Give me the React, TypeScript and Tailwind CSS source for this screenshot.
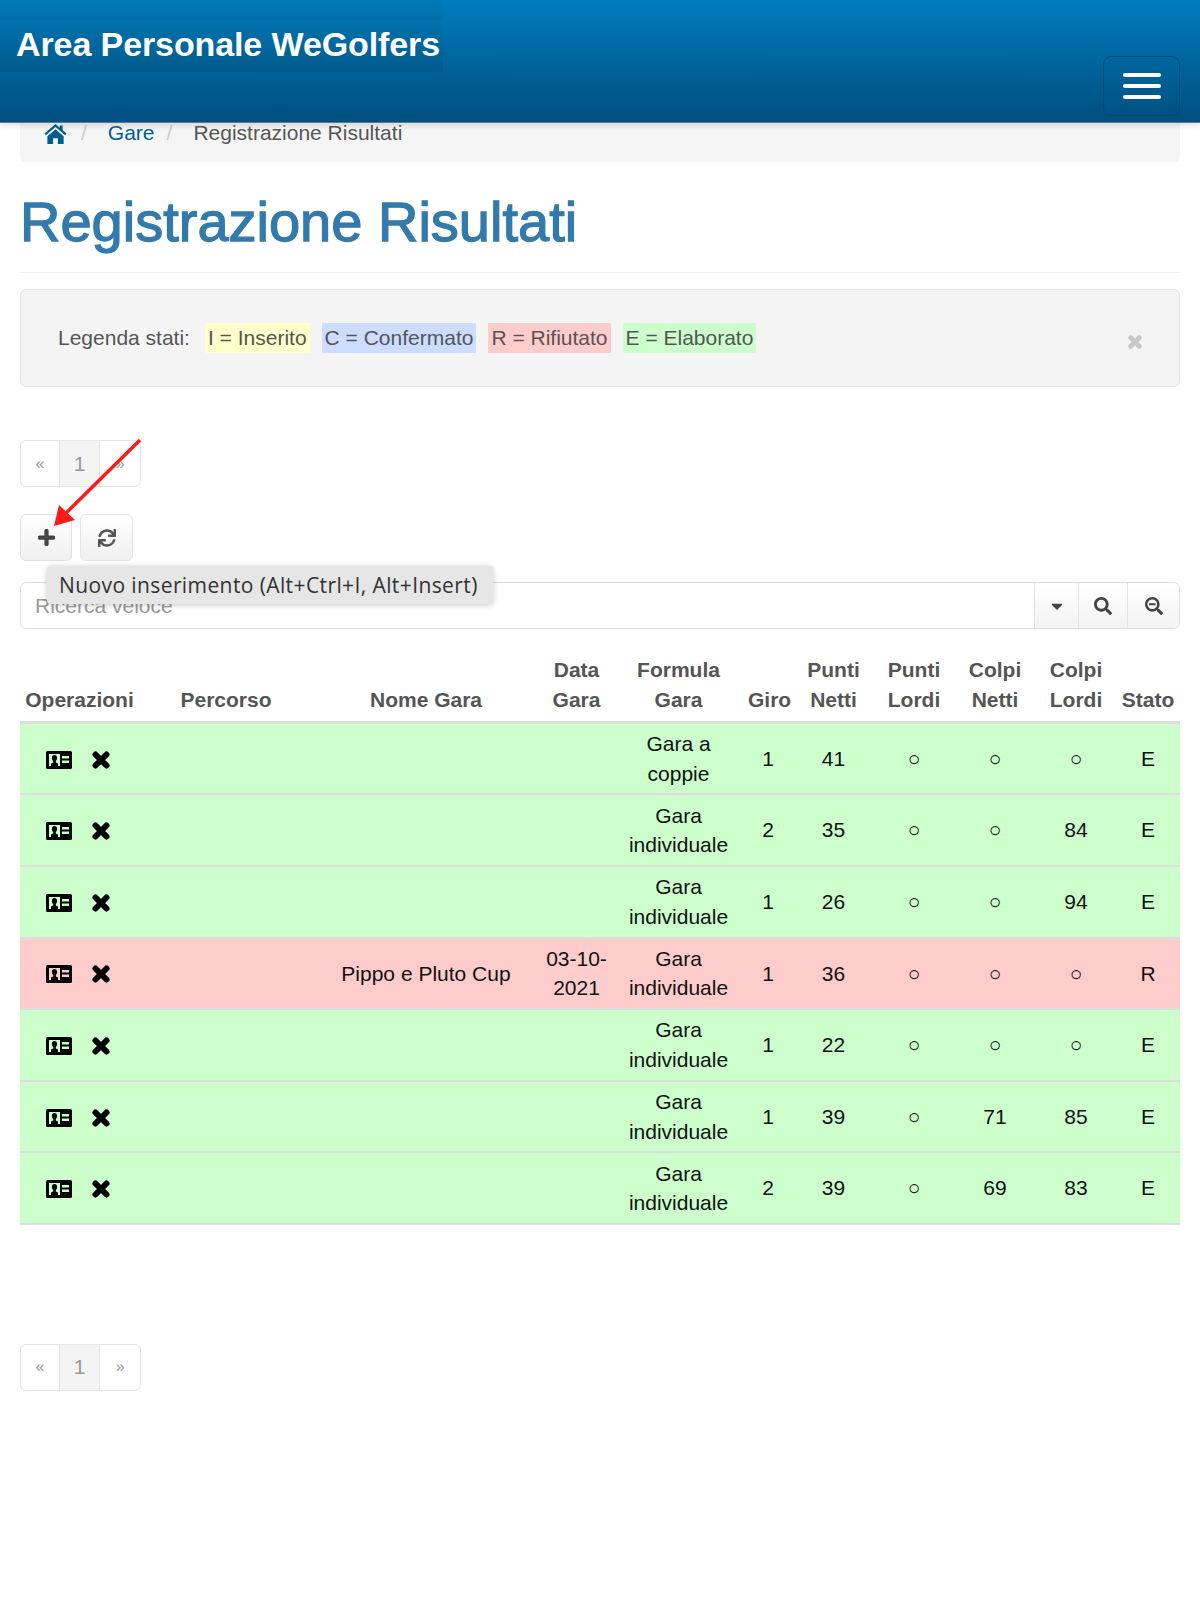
import { FaSearch, FaSearchMinus, FaSync, FaCaretDown } from "react-icons/fa";

type Row = {
  formula: [string, string];
  giro: string;
  netti: string;
  colpiNetti: string;
  colpiLordi: string;
  stato: string;
  nome?: string;
  data?: [string, string];
};

const rows: Row[] = [
  { formula: ["Gara a", "coppie"], giro: "1", netti: "41", colpiNetti: "○", colpiLordi: "○", stato: "E" },
  { formula: ["Gara", "individuale"], giro: "2", netti: "35", colpiNetti: "○", colpiLordi: "84", stato: "E" },
  { formula: ["Gara", "individuale"], giro: "1", netti: "26", colpiNetti: "○", colpiLordi: "94", stato: "E" },
  {
    formula: ["Gara", "individuale"],
    giro: "1",
    netti: "36",
    colpiNetti: "○",
    colpiLordi: "○",
    stato: "R",
    nome: "Pippo e Pluto Cup",
    data: ["03-10-", "2021"],
  },
  { formula: ["Gara", "individuale"], giro: "1", netti: "22", colpiNetti: "○", colpiLordi: "○", stato: "E" },
  { formula: ["Gara", "individuale"], giro: "1", netti: "39", colpiNetti: "71", colpiLordi: "85", stato: "E" },
  { formula: ["Gara", "individuale"], giro: "2", netti: "39", colpiNetti: "69", colpiLordi: "83", stato: "E" },
];

const CardIcon = () => (
  <svg width="26" height="18" viewBox="0 0 26 18" className="block">
    <path
      fillRule="evenodd"
      d="M1.500 0h23A1.500 1.500 0 0 1 26 1.500v15a1.500 1.500 0 0 1-1.500 1.500h-23A1.500 1.500 0 0 1 0 16.500v-15A1.500 1.500 0 0 1 1.500 0zM3 3v12h11V3zM16 5v2.500h7V5zM16 9.500V12h7V9.500z"
      fill="#000"
    />
    <path d="M8.500 4c1.700 0 2.600 1.300 2.600 3 0 1.300-.6 2.400-1.300 3v1.500l2.200 1V15H5v-2.500l2.200-1V10c-.7-.6-1.300-1.700-1.300-3 0-1.700.9-3 2.600-3z" fill="#000" />
  </svg>
);

const RemoveIcon = ({ size, color }: { size: number; color: string }) => (
  <svg width={size} height={size} viewBox="0 0 20 20" className="block">
    <path d="M4.500 4.500L15.500 15.500M15.500 4.500L4.500 15.500" stroke={color} strokeWidth="6" strokeLinecap="round" fill="none" />
  </svg>
);

const HomeIcon = () => (
  <svg width="23" height="22" viewBox="0 0 24 23" className="block" fill="#005f8f">
    <path d="M12 1L0.500 11l1.500 1.800L12 4.200l10 8.600L23.500 11l-4-3.500V2.500h-3v2.400z" />
    <path d="M12 6.500L3.500 13.800V22h6v-6h5v6h6v-8.200z" />
  </svg>
);

const Pagination = () => (
  <div className="flex h-[47px] w-[121px] rounded-md border border-[#e4e4e4] text-[#999]">
    <span className="flex w-[39px] items-center justify-center border-r border-[#e4e4e4] text-[16px]">«</span>
    <span className="flex w-[41px] items-center justify-center border-r border-[#e4e4e4] bg-[#f4f4f4] text-[21px]">1</span>
    <span className="flex w-[40px] items-center justify-center text-[16px]">»</span>
  </div>
);

const Th = ({ a, b }: { a?: string; b: string }) => (
  <th className="px-[5px] pb-[7px] pt-0 text-center align-bottom font-bold text-[#555]">
    {a && <div>{a}</div>}
    <div>{b}</div>
  </th>
);

const Td = ({ children }: { children: React.ReactNode }) => (
  <td className="px-[5px] py-[5px] text-center align-middle">{children}</td>
);

export default function App() {
  return (
    <div className="relative min-h-[1600px] bg-white font-['Liberation_Sans',Arial,sans-serif] text-[21px] leading-[30px] text-[#111]">
      <header className="relative z-10 h-[123px] border-b border-[#4d7f9f] bg-gradient-to-b from-[#007dbd] to-[#004f7f] shadow-[0_2px_6px_rgba(0,0,0,0.15)]">
        <div className="absolute left-0 top-0 h-[20px] w-[443px] bg-gradient-to-b from-[#007bba] to-[#006fa8]" />
        <div className="absolute left-0 top-[20px] h-[52px] w-[443px] bg-gradient-to-b from-[#0073ae] to-[#005a8c] pl-[16px] text-[34px] font-bold leading-[48px] tracking-[-0.1px] text-white">
          Area Personale WeGolfers
        </div>
        <button className="absolute left-[1103px] top-[56px] flex h-[60px] w-[77px] flex-col items-center justify-center gap-[6.700px] rounded-lg border border-[#004a78]">
          <span className="h-[4px] w-[38px] rounded-sm bg-white" />
          <span className="h-[4px] w-[38px] rounded-sm bg-white" />
          <span className="h-[4px] w-[38px] rounded-sm bg-white" />
        </button>
      </header>

      <main className="px-[20px]">
        <nav className="flex h-[39px] items-start rounded-b-md bg-[#f5f5f5] pl-[24px] leading-[20px]">
          <HomeIcon />
          <span className="ml-[14px] text-[#ccc]">/</span>
          <span className="ml-[21px] text-[#005f8f]">Gare</span>
          <span className="ml-[12px] text-[#ccc]">/</span>
          <span className="ml-[21px] text-[#555]">Registrazione Risultati</span>
        </nav>

        <div className="border-b border-[#eee] pb-[18px] pt-[28px]">
          <h1 className="text-[56px] font-normal leading-[64px] text-[#337aac] [-webkit-text-stroke:1.300px_#337aac]">Registrazione Risultati</h1>
        </div>

        <div className="relative mt-[16px] flex h-[98px] items-center rounded-md border border-[#e3e3e3] bg-[#f4f4f4] pl-[37px] text-[#555]">
          <span>Legenda stati:</span>
          <span className="ml-[15px] bg-[#ffffcc] px-[3px]">I = Inserito</span>
          <span className="ml-[12px] bg-[#ccddff] px-[3px]">C = Confermato</span>
          <span className="ml-[12px] bg-[#ffcccc] px-[3px]">R = Rifiutato</span>
          <span className="ml-[12px] bg-[#ccffcc] px-[3px]">E = Elaborato</span>
          <span className="absolute right-[36px] top-[44px]">
            <RemoveIcon size={16} color="#c8c8c8" />
          </span>
        </div>

        <div className="mt-[53px]">
          <Pagination />
        </div>

        <div className="mt-[27px] flex gap-[8px]">
          <button className="flex h-[47px] w-[52px] items-center justify-center rounded-md border border-[#e0e0e0] bg-gradient-to-b from-white to-[#f0f0f0]">
            <svg width="17" height="17" viewBox="0 0 18 18">
              <path d="M9 2v14M2 9h14" stroke="#444" strokeWidth="4.500" strokeLinecap="round" fill="none" />
            </svg>
          </button>
          <button className="flex h-[47px] w-[53px] items-center justify-center rounded-md border border-[#e4e4e4] bg-gradient-to-b from-white to-[#f0f0f0] text-[#555]">
            <FaSync className="text-[18px]" />
          </button>
        </div>

        <div className="mt-[21px] flex h-[47px] rounded-md border border-[#ddd]">
          <div className="flex-1 pl-[14px] leading-[46px] text-[#999]">Ricerca veloce</div>
          <span className="flex w-[44px] items-center justify-center border-l border-[#e4e4e4] bg-gradient-to-b from-white to-[#f3f3f3] text-[#444]">
            <FaCaretDown className="text-[18px]" />
          </span>
          <span className="flex w-[49px] items-center justify-center border-l border-[#e4e4e4] bg-gradient-to-b from-white to-[#f3f3f3] text-[#444]">
            <FaSearch className="text-[18px]" />
          </span>
          <span className="flex w-[52px] items-center justify-center rounded-r-md border-l border-[#e4e4e4] bg-gradient-to-b from-white to-[#f3f3f3] text-[#444]">
            <FaSearchMinus className="text-[18px]" />
          </span>
        </div>

        <table className="mt-[26px] w-full table-fixed border-collapse leading-[29.600px]">
          <colgroup>
            <col className="w-[119px]" />
            <col className="w-[174px]" />
            <col className="w-[226px]" />
            <col className="w-[75px]" />
            <col className="w-[129px]" />
            <col className="w-[50px]" />
            <col className="w-[81px]" />
            <col className="w-[80px]" />
            <col className="w-[82px]" />
            <col className="w-[80px]" />
            <col className="w-[64px]" />
          </colgroup>
          <thead>
            <tr className="border-b-[3px] border-[#ddd]">
              <Th b="Operazioni" />
              <Th b="Percorso" />
              <Th b="Nome Gara" />
              <Th a="Data" b="Gara" />
              <Th a="Formula" b="Gara" />
              <Th b="Giro" />
              <Th a="Punti" b="Netti" />
              <Th a="Punti" b="Lordi" />
              <Th a="Colpi" b="Netti" />
              <Th a="Colpi" b="Lordi" />
              <Th b="Stato" />
            </tr>
          </thead>
          <tbody>
            {rows.map((r, i) => (
              <tr key={i} className={`h-[71.600px] border-b-2 border-[#dddddd] ${r.stato === "R" ? "bg-[#ffcccc]" : "bg-[#ccffcc]"}`}>
                <td className="px-[5px] py-[5px] align-middle">
                  <div className="flex items-center pl-[21px] pt-[2px]">
                    <CardIcon />
                    <span className="ml-[19px]">
                      <RemoveIcon size={20} color="#000" />
                    </span>
                  </div>
                </td>
                <Td>{""}</Td>
                <Td>{r.nome}</Td>
                <Td>
                  {r.data && (
                    <>
                      <div>{r.data[0]}</div>
                      <div>{r.data[1]}</div>
                    </>
                  )}
                </Td>
                <Td>
                  <div>{r.formula[0]}</div>
                  <div>{r.formula[1]}</div>
                </Td>
                <Td>{r.giro}</Td>
                <Td>{r.netti}</Td>
                <Td>○</Td>
                <Td>{r.colpiNetti}</Td>
                <Td>{r.colpiLordi}</Td>
                <Td>{r.stato}</Td>
              </tr>
            ))}
          </tbody>
        </table>

        <div className="mt-[119px]">
          <Pagination />
        </div>
      </main>

      <div className="absolute left-[47px] top-[566px] z-20 rounded-sm bg-[#e6e6e6] pb-[4px] pl-[12px] pr-[15px] pt-[4px] font-['Open_Sans',sans-serif] text-[21px] leading-[30px] tracking-[0.4px] text-[#333] shadow-[0_1px_6px_rgba(0,0,0,0.22)]">
        Nuovo inserimento (Alt+Ctrl+I, Alt+Insert)
      </div>

      <svg className="absolute left-[46px] top-[434px] z-30" width="100" height="100" viewBox="0 0 100 100">
        <path d="M94 6L12 87" stroke="#ff1a1a" strokeWidth="3.500" fill="none" />
        <path d="M8 92L13 71L29 86Z" fill="#ff1a1a" />
      </svg>
    </div>
  );
}
